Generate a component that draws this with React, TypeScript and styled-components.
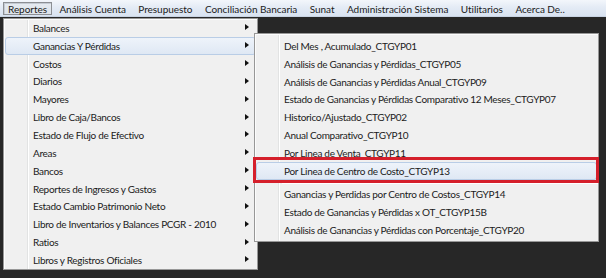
import styled, { createGlobalStyle, css } from "styled-components";

const ROW = 17.85;

const GlobalStyle = createGlobalStyle`
  html, body {
    margin: 0;
    padding: 0;
    background: #272727;
  }
  body {
    font-family: Lato, "Open Sans", sans-serif;
    font-size: 10px;
    letter-spacing: -0.3px;
    color: #1b1b1b;
  }
`;

const Screen = styled.div`
  position: relative;
  width: 606px;
  height: 278px;
  overflow: hidden;
  background: #272727;
`;

const MenuBar = styled.div`
  display: flex;
  align-items: center;
  gap: 2.5px;
  height: 17px;
  padding-left: 3px;
  letter-spacing: -0.05px;
  background: linear-gradient(#f3f6fb 0%, #e4ebf5 45%, #d9e3f1 100%);
  border-bottom: 1px solid #c9d4e3;
  box-sizing: border-box;
`;

const BarItem = styled.div<{ $active?: boolean }>`
  height: 13px;
  line-height: 12px;
  padding: 0 4px;
  border: 1px solid transparent;
  white-space: nowrap;
  box-sizing: border-box;
  ${({ $active }) =>
    $active &&
    css`
      border-color: #8c8f94;
      background: linear-gradient(#e6ebf1, #dde3ea);
      box-shadow: inset 1px 1px 0 #c5cbd3;
    `}
`;

const Menu = styled.div<{ $left: number; $top: number; $width: number; $pad?: boolean }>`
  position: absolute;
  left: ${({ $left }) => $left}px;
  top: ${({ $top }) => $top}px;
  width: ${({ $width }) => $width}px;
  box-sizing: border-box;
  border: 1px solid #979797;
  padding: ${({ $pad }) => ($pad ? "3px 0 2px 0" : "0")};
  background:
    linear-gradient(to right, transparent 23px, #e2e3e3 23px, #e2e3e3 24px, #ffffff 24px, #ffffff 25px, transparent 25px),
    #f0f0f0;
  box-shadow: inset 1px 1px 0 #fcfcfc;
`;

const Item = styled.div<{ $hover?: boolean }>`
  position: relative;
  display: flex;
  align-items: center;
  height: ${ROW}px;
  padding-left: 27px;
  margin: 0 1px;
  box-sizing: border-box;
  white-space: nowrap;
  border: 1px solid transparent;
  border-radius: 3px;
  ${({ $hover }) =>
    $hover &&
    css`
      border-color: #b9cde6;
      background: linear-gradient(#eef3fa, #dfe8f4);
    `}
`;

const Arrow = styled.span`
  position: absolute;
  right: 6px;
  top: 50%;
  margin-top: -3.5px;
  width: 0;
  height: 0;
  border-left: 4px solid #111;
  border-top: 3.5px solid transparent;
  border-bottom: 3.5px solid transparent;
`;

const Separator = styled.div`
  height: 5.8px;
  margin-left: 27px;
  display: flex;
  align-items: center;
  &::after {
    content: "";
    flex: 1;
    height: 1px;
    background: #e0e0e0;
    box-shadow: 0 1px 0 #fff;
  }
`;

const Callout = styled.div`
  position: absolute;
  left: 253px;
  top: 157px;
  width: 346px;
  height: 26px;
  box-sizing: border-box;
  border: 3.5px solid #d51f2b;
  pointer-events: none;
`;

const barItems = [
  "Análisis Cuenta",
  "Presupuesto",
  "Conciliación Bancaria",
  "Sunat",
  "Administración Sistema",
  "Utilitarios",
  "Acerca De..",
];

const reportes = [
  "Balances",
  "Ganancias Y Pérdidas",
  "Costos",
  "Diarios",
  "Mayores",
  "Libro de Caja/Bancos",
  "Estado de Flujo de Efectivo",
  "Areas",
  "Bancos",
  "Reportes de Ingresos y Gastos",
  "Estado Cambio Patrimonio Neto",
  "Libro de Inventarios y Balances PCGR - 2010",
  "Ratios",
  "Libros y Registros Oficiales",
];

const ganancias = [
  "Del Mes , Acumulado_CTGYP01",
  "Análisis de Ganancias y Pérdidas_CTGYP05",
  "Análisis de Ganancias y Pérdidas Anual_CTGYP09",
  "Estado de Ganancias y Pérdidas Comparativo 12 Meses_CTGYP07",
  "Historico/Ajustado_CTGYP02",
  "Anual Comparativo_CTGYP10",
  "Por Linea de Venta_CTGYP11",
  "Por Linea de Centro de Costo_CTGYP13",
  "-",
  "Ganancias y Perdidas por Centro de Costos_CTGYP14",
  "Estado de Ganancias y Pérdidas x OT_CTGYP15B",
  "Análisis de Ganancias y Pérdidas con Porcentaje_CTGYP20",
];

export default function App() {
  return (
    <Screen>
      <GlobalStyle />
      <MenuBar>
        <BarItem $active>Reportes</BarItem>
        {barItems.map((t) => (
          <BarItem key={t}>{t}</BarItem>
        ))}
      </MenuBar>

      <Menu $left={3} $top={18} $width={255}>
        {reportes.map((t, i) => (
          <Item key={t} $hover={i === 1}>
            {t}
            <Arrow />
          </Item>
        ))}
      </Menu>

      <Menu $left={254} $top={33} $width={345} $pad>
        {ganancias.map((t, i) =>
          t === "-" ? (
            <Separator key={i} />
          ) : (
            <Item key={t} $hover={t.endsWith("CTGYP13")}>
              {t}
            </Item>
          )
        )}
      </Menu>

      <Callout />
    </Screen>
  );
}
